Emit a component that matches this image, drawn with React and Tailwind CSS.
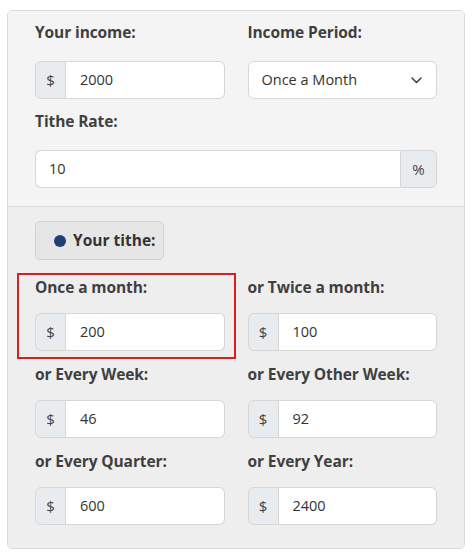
import React from "react";

const font = { fontFamily: '"Open Sans", "Noto Sans", Arial, sans-serif' };

function Label({ children }) {
  return (
    <div className="h-[24px] text-[15.5px] font-bold leading-[24px] text-[#3f3f3f] tracking-[-0.1px]">
      {children}
    </div>
  );
}

function Money({ value }) {
  return (
    <div className="flex h-[38px] w-full">
      <div className="flex w-[31px] items-center justify-center rounded-l-[6px] border border-[#d6d6d6] bg-[#e9ecef] text-[15px] text-[#444]">
        $
      </div>
      <div className="flex flex-1 items-center rounded-r-[6px] border border-l-0 border-[#d6d6d6] bg-white pl-[14px] text-[14.5px] text-[#333]">
        {value}
      </div>
    </div>
  );
}

function Field({ label, value, highlight }) {
  return (
    <div className="relative">
      {highlight && (
        <div className="pointer-events-none absolute left-[-18px] right-[-11px] top-[-2px] bottom-[-8px] border-2 border-[#e01b1b]" />
      )}
      <Label>{label}</Label>
      <div className="mt-[14px]">
        <Money value={value} />
      </div>
    </div>
  );
}

export default function App() {
  return (
    <div className="h-[558px] w-[474px] bg-white pt-[10px] pl-[7px]" style={font}>
      <div className="w-[458px] overflow-hidden rounded-[5px] border border-[#d9d9d9]">
        <div className="border-b border-[#dcdcdc] bg-[#f4f4f4] px-[27px] pt-[9px] pb-[18px]">
          <div className="grid grid-cols-2 gap-x-[23px]">
            <div>
              <Label>Your income:</Label>
              <div className="mt-[17px]">
                <Money value="2000" />
              </div>
            </div>
            <div>
              <Label>Income Period:</Label>
              <div className="mt-[17px] flex h-[38px] items-center justify-between rounded-[6px] border border-[#d6d6d6] bg-white pl-[13px] pr-[14px] text-[14.5px] text-[#333]">
                <span>Once a Month</span>
                <svg width="11" height="7" viewBox="0 0 11 7" fill="none">
                  <path d="M1 1l4.5 4.5L10 1" stroke="#444" strokeWidth="1.6" strokeLinecap="round" strokeLinejoin="round" />
                </svg>
              </div>
            </div>
          </div>
          <div className="mt-[10px]">
            <Label>Tithe Rate:</Label>
            <div className="mt-[17px] flex h-[38px]">
              <div className="flex flex-1 items-center rounded-l-[6px] border border-r-0 border-[#d6d6d6] bg-white pl-[13px] text-[14.5px] text-[#333]">
                10
              </div>
              <div className="flex w-[37px] items-center justify-center rounded-r-[6px] border border-[#d6d6d6] bg-[#e9ecef] text-[15px] text-[#444]">
                %
              </div>
            </div>
          </div>
        </div>
        <div className="bg-[#eeeeee] px-[27px] pt-[14px] pb-[23px]">
          <div className="flex h-[39px] w-[129px] items-center rounded-[5px] border border-[#d2d2d2] bg-[#e6e6e6] pl-[18px] text-[15.5px] font-bold text-[#333]">
            <span className="mr-[7px] inline-block h-[12px] w-[12px] rounded-full bg-[#1f4077]" />
            Your tithe:
          </div>
          <div className="mt-[15px] grid grid-cols-2 gap-x-[23px] gap-y-[11px]">
            <Field label="Once a month:" value="200" highlight />
            <Field label="or Twice a month:" value="100" />
            <Field label="or Every Week:" value="46" />
            <Field label="or Every Other Week:" value="92" />
            <Field label="or Every Quarter:" value="600" />
            <Field label="or Every Year:" value="2400" />
          </div>
        </div>
      </div>
    </div>
  );
}
